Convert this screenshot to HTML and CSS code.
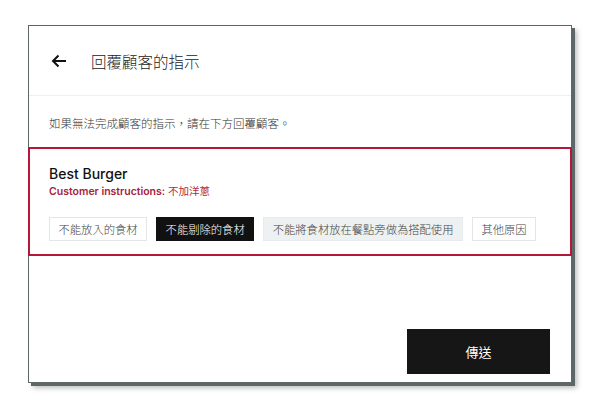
FILE: index.html
```html
<!DOCTYPE html>
<html lang="zh-Hant">
<head>
<meta charset="utf-8">
<link rel="stylesheet" href="styles.css">
</head>
<body>
<div class="frame">
  <div class="header">
    <svg class="back" width="16" height="14" viewBox="0 0 16 14"><path d="M15 7H2M7.5 1.5L2 7l5.5 5.5" fill="none" stroke="#111" stroke-width="2"/></svg>
    <span class="title">回覆顧客的指示</span>
  </div>
  <div class="intro">如果無法完成顧客的指示，請在下方回覆顧客。</div>
  <div class="item">
    <div class="item-name">Best Burger</div>
    <div class="item-note"><b>Customer instructions:</b> 不加洋蔥</div>
    <div class="choices">
      <span class="chip">不能放入的食材</span>
      <span class="chip chip-active">不能剔除的食材</span>
      <span class="chip chip-muted">不能將食材放在餐點旁做為搭配使用</span>
      <span class="chip">其他原因</span>
    </div>
  </div>
  <div class="footer">
    <button class="send">傳送</button>
  </div>
</div>
</body>
</html>
```
FILE: styles.css
```css
html, body {
  margin: 0;
  padding: 0;
  background: #fff;
}
body {
  width: 600px;
  height: 409px;
  overflow: hidden;
  font-family: "Noto Sans CJK TC", "Noto Sans", sans-serif;
  color: #333;
}
.frame {
  margin: 25px 0 0 28px;
  width: 542px;
  height: 356px;
  border: 1px solid #5d6767;
  box-shadow: 3px 3px 0 #5d6767, 5px 5px 5px rgba(60, 70, 70, 0.35);
  display: flex;
  flex-direction: column;
  background: #fff;
}
.header {
  height: 69px;
  display: flex;
  align-items: center;
  padding-left: 22px;
  border-bottom: 1px solid #efefef;
  flex: none;
}
.back {
  flex: none;
}
.title {
  margin-left: 24px;
  font-size: 15.5px;
  font-weight: 300;
  color: #222;
}
.intro {
  padding: 19px 0 16px 20px;
  font-size: 11.5px;
  line-height: 16px;
  color: #333;
  font-weight: 300;
}
.item {
  margin: 0 -1px;
  border: 2px solid #b3183a;
  padding: 16px 0 13px 19px;
  flex: none;
}
.item-name {
  font-family: Inter, "Noto Sans", sans-serif;
  font-size: 14px;
  line-height: 18px;
  font-weight: 500;
  color: #111;
}
.item-note {
  margin-top: 2px;
  font-size: 10.5px;
  line-height: 14px;
  color: #b3283f;
  font-family: Inter, "Noto Sans CJK TC", sans-serif;
}
.item-note b {
  font-weight: 600;
  color: #a8223a;
}
.choices {
  display: flex;
  gap: 9px;
  margin-top: 18px;
}
.chip {
  flex: none;
  white-space: nowrap;
  height: 24px;
  box-sizing: border-box;
  display: flex;
  align-items: center;
  padding: 0 8.5px;
  font-size: 11.3px;
  font-weight: 300;
  color: #444;
  border: 1px solid #e4e6e6;
  background: #fff;
}
.chip-active {
  background: #111;
  border-color: #111;
  color: #fff;
}
.chip-muted {
  background: #eef1f1;
  border-color: #e8ebeb;
}
.footer {
  flex: 1;
  display: flex;
  justify-content: flex-end;
  align-items: flex-end;
  padding: 0 21px 8px 0;
}
.send {
  width: 143px;
  height: 45px;
  border: none;
  background: #161616;
  color: #fff;
  font-family: "Noto Sans CJK TC", sans-serif;
  font-size: 13px;
  padding: 0;
}
```
